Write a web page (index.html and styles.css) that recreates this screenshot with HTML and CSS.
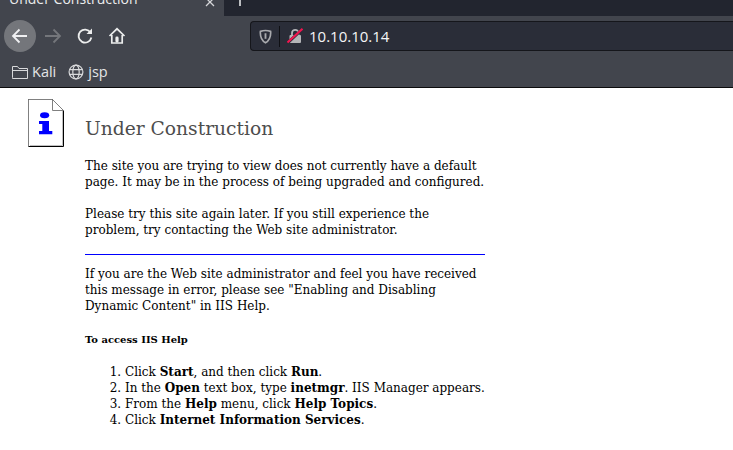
FILE: index.html
```html
<!DOCTYPE html>
<html lang="en">
<head>
    <meta charset="UTF-8">
    <meta name="viewport" content="width=device-width, initial-scale=1.0">
    <title>Under Construction</title>
    <link rel="stylesheet" href="styles.css">
</head>
<body>
    <div class="browser">
        <div class="tabstrip">
            <div class="tab">
                <span class="tab-title">Under Construction</span>
                <svg class="tab-close" width="10" height="10" viewBox="0 0 10 10"><path d="M1 -2 L9 6 M9 -2 L1 6" stroke="#d5d6d9" stroke-width="1.3" fill="none"/></svg>
            </div>
            <svg class="tab-new" width="12" height="16" viewBox="0 0 12 16"><path d="M6 0 V6" stroke="#e4e5e7" stroke-width="1.6" fill="none"/></svg>
        </div>
        <div class="toolbar">
            <div class="nav-btn nav-back">
                <svg width="18" height="18" viewBox="0 0 18 18"><path d="M16 9 H2 M8.5 2.5 L2 9 L8.5 15.5" stroke="#f0f0f2" stroke-width="1.8" fill="none"/></svg>
            </div>
            <div class="nav-btn nav-forward">
                <svg width="18" height="18" viewBox="0 0 18 18"><path d="M1 9 H16 M9.5 2.5 L16 9 L9.5 15.5" stroke="#74767b" stroke-width="1.8" fill="none"/></svg>
            </div>
            <div class="nav-btn">
                <svg width="18" height="18" viewBox="0 0 18 18"><path d="M14.5 5.5 A6.5 6.5 0 1 0 15.4 10.5" stroke="#eceded" stroke-width="1.8" fill="none"/><path d="M16 1.5 V7 H10.5 Z" fill="#eceded"/></svg>
            </div>
            <div class="nav-btn">
                <svg width="18" height="18" viewBox="0 0 18 18"><path d="M1.5 9 L9 1.8 L16.5 9 M3.8 8 V16 H14.2 V8" stroke="#eceded" stroke-width="1.7" fill="none"/><rect x="7.4" y="9.5" width="3.2" height="6" rx="1.4" fill="#eceded"/></svg>
            </div>
            <div class="urlbar">
                <svg class="url-shield" width="13" height="15" viewBox="0 0 14 16"><path d="M1.5 2.5 Q7 0.5 12.5 2.5 Q13.2 11 7 14.8 Q0.8 11 1.5 2.5 Z" stroke="#a9aaae" stroke-width="1.8" fill="none"/><path d="M7 4.5 V10.5" stroke="#a9aaae" stroke-width="2" fill="none"/></svg>
                <span class="url-sep"></span>
                <svg class="url-lock" width="16" height="16" viewBox="0 0 16 16"><path d="M5 8 V5 A3.2 3.2 0 0 1 11.4 5 V8" stroke="#b4b5b8" stroke-width="1.8" fill="none"/><rect x="2.5" y="7" width="11.5" height="8" rx="1" fill="#b4b5b8"/><path d="M0.5 15 L15.5 1" stroke="#2a2d38" stroke-width="3" fill="none"/><path d="M0.5 14.5 L15.5 0.8" stroke="#f2154f" stroke-width="2" fill="none"/></svg>
                <span class="url-text">10.10.10.14</span>
            </div>
        </div>
        <div class="bookmarks">
            <div class="bookmark">
                <svg width="16" height="14" viewBox="0 0 16 14"><path d="M0.5 12.5 V1.5 H5.5 L7 3.5 H15.5 V13.5 H0.5 Z M0.5 5.5 H15.5" stroke="#d8d9db" stroke-width="1" fill="none"/></svg>
                <span>Kali</span>
            </div>
            <div class="bookmark">
                <svg width="16" height="16" viewBox="0 0 16 16"><g stroke="#d8d9db" stroke-width="1.2" fill="none"><circle cx="8" cy="8" r="6.9"/><ellipse cx="8" cy="8" rx="3.2" ry="6.9"/><path d="M1.5 5.7 H14.5 M1.5 10.3 H14.5"/></g></svg>
                <span>jsp</span>
            </div>
        </div>
    </div>

    <div class="page">
        <div class="page-icon">
            <svg width="36" height="48" viewBox="0 0 36 48">
                <path d="M0.5 0.5 H24.5 L35.5 11.5 V47.5 H0.5 Z" fill="#fff" stroke="#000"/>
                <path d="M0.5 47.5 V0.5 H24" fill="none" stroke="#808080"/>
                <path d="M24.5 0.5 V11.5 H35.5" fill="#fff" stroke="#808080"/>
                <path d="M34.5 12 V46.5 H2" fill="none" stroke="#c0c0c0"/>
                <ellipse cx="16.6" cy="16.3" rx="4.6" ry="3" fill="#00f"/>
                <path d="M11 22 H21 V32 H24.3 V35.3 H11 V32 H14.3 V25 H11 Z" fill="#00f"/>
            </svg>
        </div>
        <div class="page-body">
            <h1>Under Construction</h1>
            <p>The site you are trying to view does not currently have a default page. It may be in the process of being upgraded and configured.</p>
            <p>Please try this site again later. If you still experience the problem, try contacting the Web site administrator.</p>
            <hr>
            <p>If you are the Web site administrator and feel you have received this message in error, please see "Enabling and Disabling Dynamic Content" in IIS Help.</p>
            <h5>To access IIS Help</h5>
            <ol>
                <li>Click <b>Start</b>, and then click <b>Run</b>.</li>
                <li>In the <b>Open</b> text box, type <b>inetmgr</b>. IIS Manager appears.</li>
                <li>From the <b>Help</b> menu, click <b>Help Topics</b>.</li>
                <li>Click <b>Internet Information Services</b>.</li>
            </ol>
        </div>
    </div>
</body>
</html>
```

FILE: styles.css
```css
html, body {
    margin: 0;
    padding: 0;
    background-color: #fff;
}

body {
    width: 733px;
    height: 450px;
    overflow: hidden;
    font-family: "DejaVu Serif", serif;
}

.browser {
    background-color: #42454d;
    font-family: "Open Sans", "Noto Sans", sans-serif;
    border-bottom: 1px solid #0c0c0d;
}

.tabstrip {
    display: flex;
    height: 16px;
    background-color: #22252f;
    overflow: hidden;
}

.tab {
    width: 224px;
    padding-left: 9px;
    box-sizing: border-box;
    display: flex;
    justify-content: space-between;
    background-color: #42454d;
}

.tab-title {
    color: #eceded;
    font-size: 14px;
    line-height: 14px;
    margin-top: -8px;
}

.tab-close {
    margin-right: 9px;
}

.tab-new {
    margin-left: 10px;
}

.toolbar {
    display: flex;
    align-items: center;
    height: 40px;
    padding-left: 4px;
}

.nav-btn {
    width: 32px;
    height: 32px;
    display: flex;
    align-items: center;
    justify-content: center;
}

.nav-back {
    background-color: #74767b;
    border-radius: 50%;
}

.nav-forward {
    margin-left: 1px;
}

.urlbar {
    display: flex;
    align-items: center;
    flex: 1;
    height: 28px;
    margin-left: 117px;
    background-color: #2a2d38;
    border: 1px solid #15161b;
    border-right: 0;
    border-radius: 4px 0 0 4px;
}

.url-shield {
    margin-left: 8px;
}

.url-sep {
    width: 1px;
    height: 21px;
    margin: 0 7px;
    background-color: #0f1014;
}

.url-text {
    margin-left: 6px;
    color: #f5f5f6;
    font-size: 15px;
}

.bookmarks {
    display: flex;
    align-items: center;
    height: 31px;
    padding-left: 12px;
    gap: 12px;
}

.bookmark {
    display: flex;
    align-items: center;
    gap: 4px;
    color: #e4e5e7;
    font-size: 14.5px;
}

.page {
    display: flex;
    padding: 11px 0 0 28px;
    color: #000;
}

.page-icon {
    width: 57px;
    flex-shrink: 0;
}

.page-body {
    width: 400px;
    font-size: 12px;
    line-height: 16px;
}

h1 {
    margin: 19px 0 19px;
    font-size: 18.67px;
    line-height: 21px;
    font-weight: normal;
    color: #4d4d4d;
}

p {
    margin: 0 0 16px;
}

hr {
    height: 1px;
    margin: 0 0 11px;
    border: 0;
    background-color: #0000ff;
}

h5 {
    margin: 20px 0 18px;
    font-size: 10px;
    line-height: 12px;
}

ol {
    margin: 0;
    padding-left: 40px;
}
```
